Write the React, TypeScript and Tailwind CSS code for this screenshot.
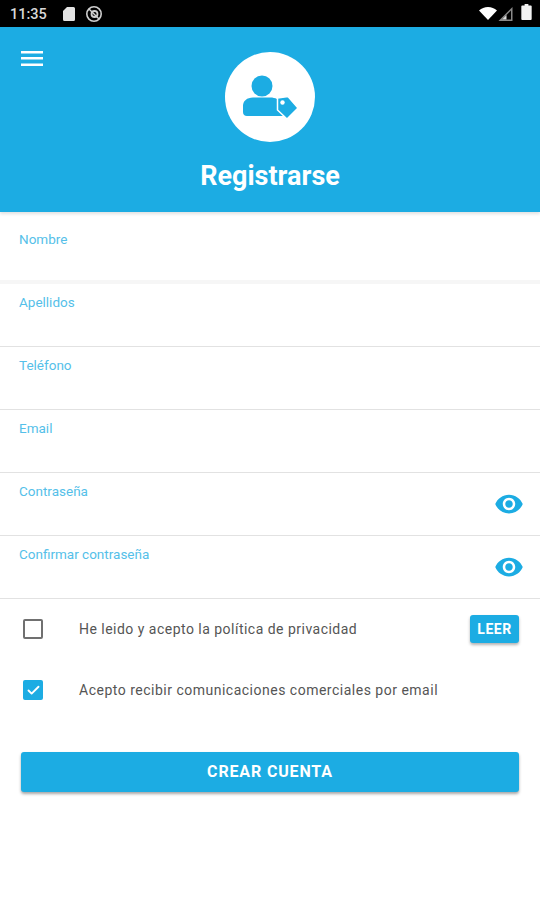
import React, { useState } from "react";
import { Check } from "lucide-react";
import { MdVisibility } from "react-icons/md";

const fields = [
  { label: "Nombre" },
  { label: "Apellidos" },
  { label: "Teléfono" },
  { label: "Email" },
  { label: "Contraseña", secret: true },
  { label: "Confirmar contraseña", secret: true },
];

function StatusBar() {
  return (
    <div className="h-[27px] bg-black flex items-center justify-between pl-[10px] pr-[8px] text-[#d8d8d8]">
      <div className="flex items-center">
        <span className="text-[14.5px] font-medium leading-none w-[43px] mt-[4px]">11:35</span>
        <svg width="12" height="14" viewBox="0 0 12 14" className="ml-[10px]">
          <path d="M4 0h6.500A1.500 1.500 0 0 1 12 1.500v11a1.500 1.500 0 0 1-1.500 1.500h-9A1.500 1.500 0 0 1 0 12.500V4z" fill="#e4e4e4" />
        </svg>
        <svg width="18" height="18" viewBox="0 0 18 18" className="ml-[10px]" fill="none" stroke="#cfcfcf">
          <circle cx="9" cy="9" r="7.200" strokeWidth="1.600" />
          <circle cx="9.500" cy="9" r="3" strokeWidth="1.800" />
          <path d="M4 4l10 10" strokeWidth="1.400" />
        </svg>
      </div>
      <div className="flex items-center gap-[1px]">
        <svg width="18" height="13" viewBox="0 0 18 13">
          <path d="M0 3.500C2.500 1.300 5.600 0 9 0s6.500 1.300 9 3.500L9 13z" fill="#fff" />
        </svg>
        <svg width="15" height="14" viewBox="0 0 14 14" className="mt-[1px]">
          <path d="M14 0v14H0z" fill="#8a8a8a" />
          <path d="M12.500 3.500V12.500H3.500z" fill="#000" />
          <path d="M8 8v4.500H3.500z" fill="#ddd" />
        </svg>
        <svg width="11" height="16" viewBox="0 0 11 17" className="ml-[7px] mb-[3px]">
          <path d="M3.500 0h4v1.500H10a1 1 0 0 1 1 1V16a1 1 0 0 1-1 1H1a1 1 0 0 1-1-1V2.500a1 1 0 0 1 1-1h2.500z" fill="#f2f2f2" />
        </svg>
      </div>
    </div>
  );
}

function ProfileBadge() {
  return (
    <div className="w-[90px] h-[90px] rounded-full bg-white flex items-center justify-center">
      <svg width="56" height="46" viewBox="0 0 56 46">
        <circle cx="20" cy="12" r="10.500" fill="#1cace3" />
        <path d="M1 38v-6c0-5 4-8.500 10-8.500h17c3 0 5 .5 7 1.500l1 11 6 6H5c-2.500 0-4-1.500-4-4z" fill="#1cace3" />
        <path d="M35.500 24l10.500-1.500L56 34 45 45 35.500 36z" fill="#1cace3" stroke="#fff" strokeWidth="1.500" strokeLinejoin="round" />
        <circle cx="40.500" cy="28.500" r="2.200" fill="#fff" />
      </svg>
    </div>
  );
}

export default function App() {
  const [privacy, setPrivacy] = useState(false);
  const [marketing, setMarketing] = useState(true);

  return (
    <div className="w-[540px] h-[900px] bg-white overflow-hidden font-['Roboto',sans-serif]">
      <StatusBar />

      {/* Blue header */}
      <div className="relative h-[185px] bg-[#1cace3] flex flex-col items-center pt-[25px] shadow-[0_2px_3px_rgba(0,0,0,0.12)]">
        <svg width="22" height="16" viewBox="0 0 22 16" className="absolute left-[21px] top-[24px]" fill="#fff">
          <rect y="0" width="22" height="2.500" />
          <rect y="6" width="22" height="2.500" />
          <rect y="12.500" width="22" height="2.500" />
        </svg>
        <ProfileBadge />
        <h1 className="mt-[16px] text-[27px] leading-[36px] font-bold text-white">Registrarse</h1>
      </div>

      {/* Form fields */}
      <div className="flex flex-col">
        {fields.map((field, i) => (
          <div
            key={field.label}
            className={i === 0
              ? "relative h-[72px] border-b-4 border-[#f6f6f6] px-[19px] pt-[19px]"
              : "relative h-[63px] border-b border-[#e2e2e2] px-[19px] pt-[10px]"}
          >
            <label className="block text-[13.500px] leading-[16px] text-[#55bfe9]">{field.label}</label>
            {field.secret && (
              <MdVisibility className="absolute right-[16px] top-[16px] w-[30px] h-[30px] text-[#1cace3]" />
            )}
          </div>
        ))}
      </div>

      {/* Checkboxes */}
      <div className="flex items-center h-[60px] pl-[23px] pr-[21px]">
        <button
          onClick={() => setPrivacy(!privacy)}
          className="w-[20px] h-[20px] shrink-0 rounded-[2px] border-2 border-[#707070] flex items-center justify-center"
        >
          {privacy && <Check className="w-[14px] h-[14px] text-[#1cace3]" />}
        </button>
        <span className="ml-[36px] flex-1 text-[14px] text-[#555] tracking-[0.48px]">He leido y acepto la política de privacidad</span>
        <button className="w-[49px] h-[28px] rounded-[3px] bg-[#1cace3] text-white text-[14px] font-bold tracking-[0.5px] shadow-[0_2px_3px_rgba(0,0,0,0.3)]">
          LEER
        </button>
      </div>

      <div className="flex items-center h-[62px] pl-[23px] pr-[21px]">
        <button
          onClick={() => setMarketing(!marketing)}
          className="w-[20px] h-[20px] shrink-0 rounded-[2px] bg-[#1cace3] flex items-center justify-center"
        >
          {marketing && <Check className="w-[15px] h-[15px] text-white" strokeWidth={3} />}
        </button>
        <span className="ml-[36px] flex-1 text-[14px] text-[#555] tracking-[0.5px]">Acepto recibir comunicaciones comerciales por email</span>
      </div>

      <div className="px-[21px] pt-[31px]">
        <button className="w-full h-[40px] rounded-[3px] bg-[#1cace3] text-white text-[16px] font-bold tracking-[0.85px] shadow-[0_2px_3px_rgba(0,0,0,0.35)]">
          CREAR CUENTA
        </button>
      </div>
    </div>
  );
}
